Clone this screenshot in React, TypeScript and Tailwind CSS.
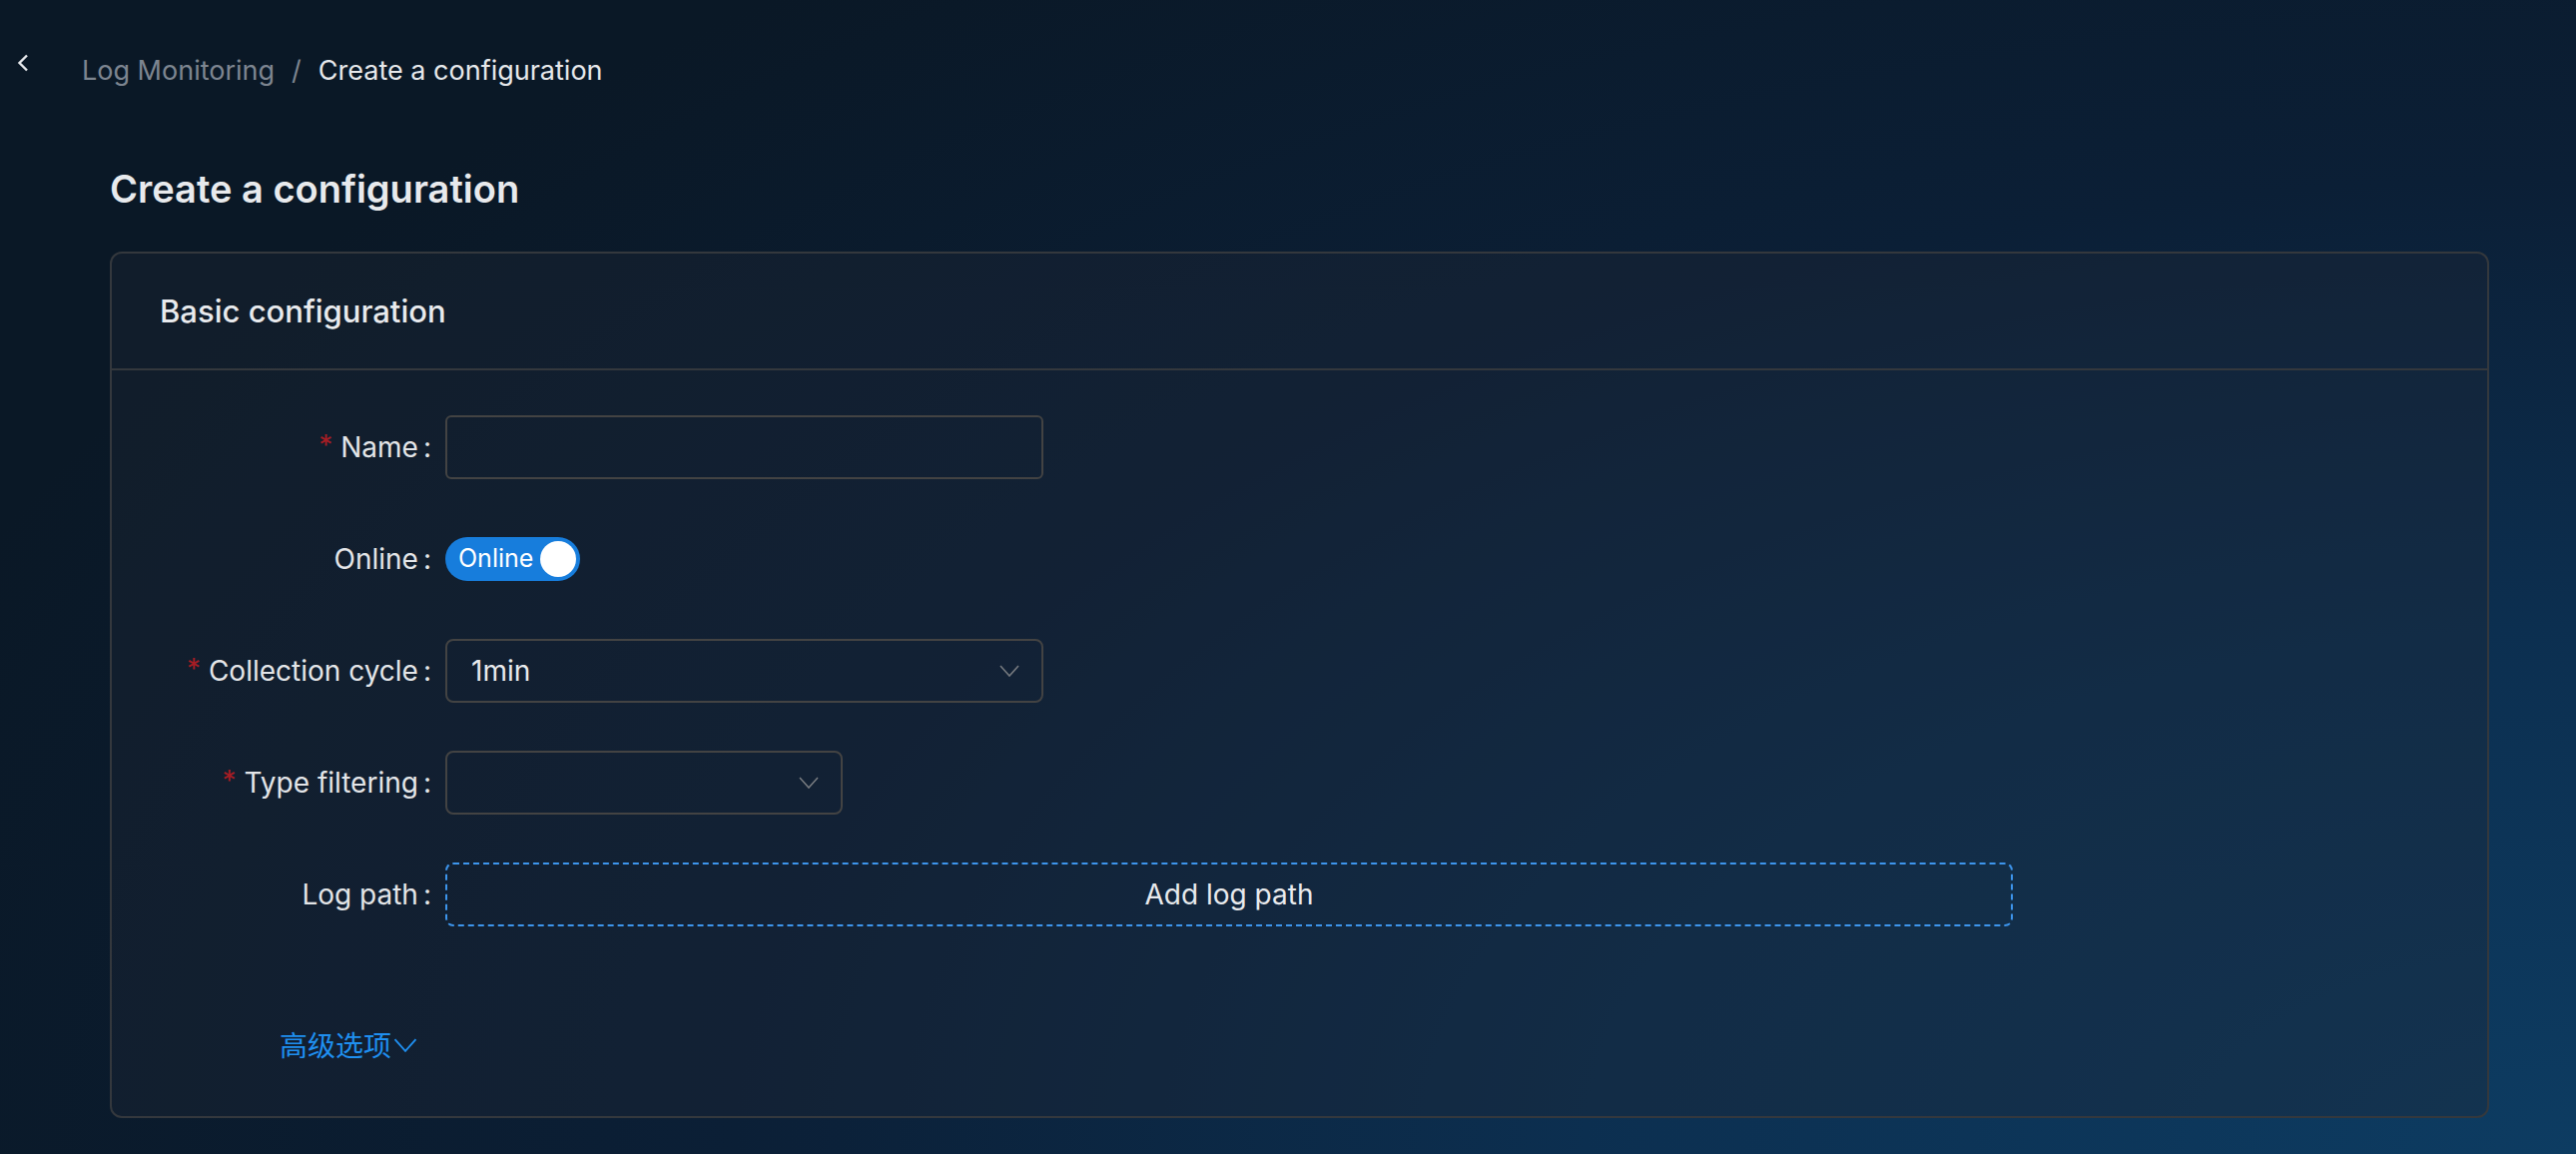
import React from "react";

function Chevron({ className }: { className?: string }) {
  return (
    <svg className={className} viewBox="0 0 20 12" fill="none">
      <polyline points="1,1 10,11 19,1" stroke="currentColor" strokeWidth="1.6" strokeLinejoin="miter" />
    </svg>
  );
}

function Label({ text, required }: { text: string; required?: boolean }) {
  return (
    <div className="w-[318px] flex items-center justify-end text-[28px] text-[#e3e5e8] shrink-0">
      {required && <span className="text-[#a61d24] mr-[8px] text-[28px] leading-none relative top-[-2px]">*</span>}
      <span>{text}</span>
      <span className="ml-[5px] mr-[-2px]">:</span>
    </div>
  );
}

function Row({ children, label, required }: { children: React.ReactNode; label: string; required?: boolean }) {
  return (
    <div className="flex items-center h-[64px] mb-[48px]">
      <Label text={label} required={required} />
      <div className="ml-[16px] flex items-center">{children}</div>
    </div>
  );
}

export default function App() {
  return (
    <div
      className="w-full min-h-[1156px] text-white bg-[radial-gradient(ellipse_110%_130%_at_100%_100%,#0d3c62_0%,#0c2f50_35%,#0b1f36_65%,#0a1826_100%)]"
      style={{ fontFamily: "Inter, 'Noto Sans CJK SC', sans-serif" }}
    >
      <div className="flex items-center h-[138px]">
        <div className="w-[82px] flex items-center pl-[17px] self-start pt-[54px]">
          <svg width="12" height="18" viewBox="0 0 12 18" fill="none">
            <polyline points="10,1.5 2.5,9 10,16.5" stroke="#e6e8eb" strokeWidth="2.4" />
          </svg>
        </div>
        <div className="flex items-center text-[27px] self-start pt-[51px]">
          <span className="text-[#7d8590]">Log Monitoring</span>
          <span className="text-[#7d8590] mx-[17px]">/</span>
          <span className="text-[#e6e8eb]">Create a configuration</span>
        </div>
      </div>

      <div className="pl-[110px] pr-[87px]">
        <h1 className="text-[38px] font-semibold text-[#e8eaed] leading-none h-[70px] mt-[16px] flex items-center">
          Create a configuration
        </h1>
        <div className="mt-[28px] border-2 border-[#34383d] rounded-[12px] bg-[rgba(30,40,52,0.36)]">
          <div className="h-[117px] flex items-center pl-[48px] pt-[2px] border-b-2 border-[#34383d]">
            <span className="text-[31px] font-medium text-[#e8eaed]">Basic configuration</span>
          </div>
          <div className="pt-[45px] pb-[10px]">
            <Row label="Name" required>
              <div className="w-[599px] h-[64px] border-2 border-[#434343] rounded-[6px]" />
            </Row>
            <Row label="Online">
              <div className="w-[135px] h-[44px] rounded-full bg-[#177ddc] flex items-center justify-between pl-[13px] pr-[4px]">
                <span className="text-[25px] text-white">Online</span>
                <span className="w-[36px] h-[36px] rounded-full bg-white" />
              </div>
            </Row>
            <Row label="Collection cycle" required>
              <div className="w-[599px] h-[64px] border-2 border-[#434343] rounded-[8px] flex items-center justify-between pl-[24px] pr-[22px]">
                <span className="text-[28px] text-[#e8eaed]">1min</span>
                <Chevron className="w-[20px] h-[12px] text-[#75797e]" />
              </div>
            </Row>
            <Row label="Type filtering" required>
              <div className="w-[398px] h-[64px] border-2 border-[#434343] rounded-[8px] flex items-center justify-end pr-[22px]">
                <Chevron className="w-[20px] h-[12px] text-[#75797e]" />
              </div>
            </Row>
            <Row label="Log path">
              <div className="w-[1570px] h-[64px] border-2 border-dashed border-[#3d95ec] rounded-[8px] flex items-center justify-center">
                <span className="text-[28px] text-[#e8eaed]">Add log path</span>
              </div>
            </Row>
            <div className="h-[64px] flex items-center pl-[168px] mt-[86px] mb-[30px]">
              <span className="text-[28px] text-[#1f8ff0]" style={{ fontFamily: "'Noto Sans CJK SC', sans-serif" }}>
                高级选项
              </span>
              <Chevron className="w-[24px] h-[14px] text-[#1f8ff0] ml-[2px] mt-[2px]" />
            </div>
          </div>
        </div>
      </div>
    </div>
  );
}
